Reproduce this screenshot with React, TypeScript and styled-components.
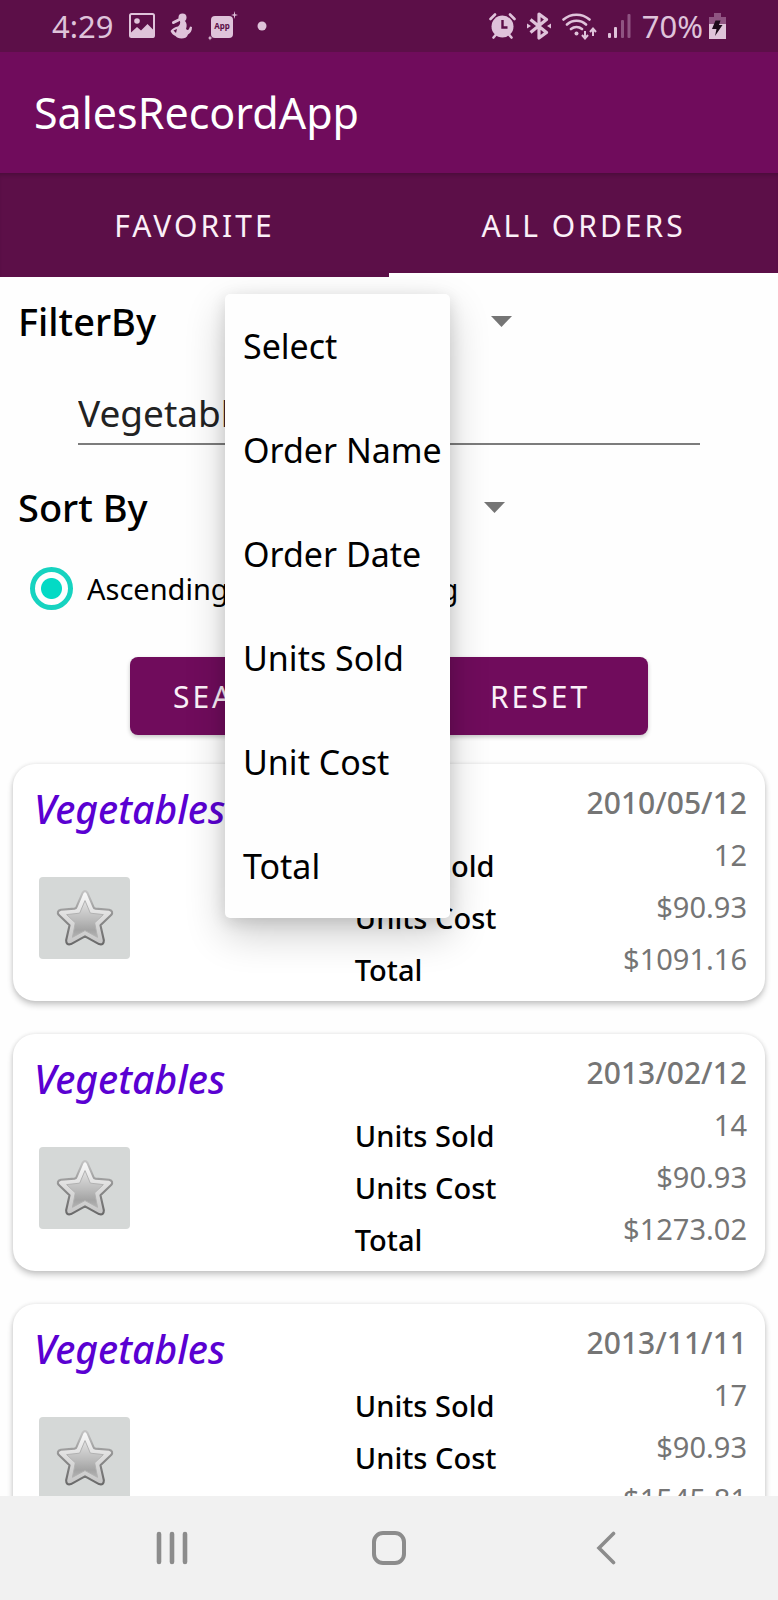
import React, { useState } from "react";
import styled, { createGlobalStyle } from "styled-components";

const GlobalStyle = createGlobalStyle`
  * { box-sizing: border-box; }
  body { margin: 0; background: #fff; }
  body, button, input, select { font-family: "Noto Sans", "Liberation Sans", sans-serif; }
`;

const Screen = styled.div`
  display: flex;
  flex-direction: column;
  height: 100vh;
  overflow: hidden;
  background: #fefefe;
  color: #000;
`;

const StatusBar = styled.div`
  display: flex;
  flex: none;
  justify-content: space-between;
  align-items: center;
  height: 52px;
  padding: 0 52px;
  background: #5c0f48;
  color: #dfc3da;
  font-size: 31px;
`;

const StatusGroup = styled.div<{ $gap: number }>`
  display: flex;
  align-items: center;
  gap: ${(p) => p.$gap}px;
  svg { display: block; flex: none; }
`;

const AppBar = styled.header`
  display: flex;
  flex: none;
  align-items: center;
  height: 121px;
  padding: 0 34px;
  background: #700c5c;
`;

const AppTitle = styled.h1`
  margin: 0;
  color: #fff;
  font-size: 43px;
  font-weight: 400;
`;

const Tabs = styled.nav`
  display: grid;
  flex: none;
  grid-template-columns: 1fr 1fr;
  height: 104px;
  background: #5c0f48;
  box-shadow: inset 0 4px 4px -2px rgba(0, 0, 0, 0.2);
`;

const Tab = styled.button<{ $active?: boolean }>`
  padding: 0;
  border: 0;
  border-top: 4px solid transparent;
  border-bottom: 4px solid ${(p) => (p.$active ? "#fff" : "transparent")};
  background: none;
  color: #fbf0f8;
  font-size: 30px;
  letter-spacing: 3px;
`;

const Filters = styled.form`
  flex: none;
  display: flex;
  flex-direction: column;
`;

const SpinnerRow = styled.div`
  position: relative;
  display: flex;
  align-items: center;
  height: 88px;
  padding-left: 18px;
`;

const SpinnerLabel = styled.label`
  width: 207px;
  font-size: 38px;
  font-weight: 500;
`;

const Spinner = styled.div<{ $width: number }>`
  display: flex;
  align-items: center;
  width: ${(p) => p.$width}px;
  svg { flex: none; }
`;

const SpinnerSelect = styled.select`
  flex: 1;
  min-width: 0;
  padding: 0 18px;
  border: 0;
  appearance: none;
  background: none;
  color: #000;
  font-size: 34px;
`;

const Menu = styled.ul`
  position: absolute;
  top: 17px;
  left: 225px;
  z-index: 2;
  width: 225px;
  margin: 0;
  padding: 0;
  border-radius: 5px;
  background: #fefefe;
  box-shadow: 0 16px 40px rgba(0, 0, 0, 0.2), 0 4px 16px rgba(0, 0, 0, 0.12);
  list-style: none;
`;

const MenuItem = styled.li`
  height: 104px;
  padding-left: 18px;
  font-size: 34px;
  line-height: 105px;
  white-space: nowrap;
  cursor: pointer;
`;

const SearchField = styled.input`
  height: 64px;
  margin: 16px 78px 18px;
  padding: 0;
  border: 0;
  border-bottom: 2px solid #7c7c7c;
  outline: 0;
  background: none;
  color: #222;
  font-size: 37px;
`;

const Directions = styled.div`
  display: flex;
  align-items: center;
  gap: 12px;
  height: 74px;
  padding-left: 30px;
`;

const Direction = styled.label`
  display: flex;
  align-items: center;
  gap: 14px;
  font-size: 29px;
`;

const Radio = styled.input`
  flex: none;
  width: 43px;
  height: 43px;
  margin: 0;
  border: 5px solid #757575;
  border-radius: 50%;
  appearance: none;
  &:checked {
    border-color: #16d3c0;
    background: radial-gradient(circle, #03dac5 10px, transparent 11px);
  }
`;

const Actions = styled.div`
  display: flex;
  justify-content: center;
  gap: 86px;
  margin-top: 32px;
`;

const ActionButton = styled.button`
  width: 216px;
  height: 78px;
  padding: 0;
  border: 0;
  border-radius: 8px;
  background: #700c5c;
  box-shadow: 0 2px 4px rgba(0, 0, 0, 0.22);
  color: #fbf0f8;
  font-size: 30px;
  letter-spacing: 3px;
`;

const Orders = styled.main`
  display: flex;
  flex: 1;
  flex-direction: column;
  gap: 33px;
  min-height: 0;
  padding: 29px 13px 0;
  overflow: hidden;
`;

const Card = styled.article`
  display: grid;
  flex: none;
  grid-template-columns: 45% auto 1fr;
  padding: 13px 18px 5px 21px;
  border-radius: 22px;
  background: #fff;
  box-shadow: 0 4px 6px rgba(0, 0, 0, 0.2), 0 0 4px rgba(0, 0, 0, 0.1);
`;

const Product = styled.div`
  padding-top: 6px;
`;

const ProductName = styled.h2`
  margin: 0 0 42px;
  color: #5a00d2;
  font-size: 39px;
  font-style: italic;
  font-weight: 500;
  line-height: 52px;
`;

const StarButton = styled.button`
  display: grid;
  place-items: center;
  width: 91px;
  height: 82px;
  margin-left: 5px;
  padding: 0;
  border: 0;
  border-radius: 4px;
  background: #d5d8d7;
`;

const Labels = styled.div`
  padding-top: 63px;
  font-size: 29px;
  font-weight: 500;
  line-height: 52px;
`;

const Values = styled.div`
  color: #757575;
  font-size: 29px;
  line-height: 52px;
  text-align: right;
`;

const OrderDate = styled.time`
  display: block;
  font-size: 30px;
  font-weight: 500;
`;

const NavBar = styled.nav`
  display: grid;
  flex: none;
  grid-template-columns: repeat(3, 1fr);
  height: 104px;
  padding: 0 63px;
  background: #f1f1f1;
`;

const NavButton = styled.button`
  display: grid;
  place-items: center;
  padding: 0;
  border: 0;
  background: none;
`;

const ICON = "#dfc3da";
const STATUS_BG = "#5c0f48";

const PictureIcon = () => (
  <svg width="26" height="26" viewBox="0 0 26 26">
    <rect x="1" y="1" width="24" height="23" rx="1.5" fill="none" stroke={ICON} strokeWidth="2" />
    <circle cx="8" cy="8" r="2.8" fill={ICON} />
    <path d="M2 19.500l6-5.500 4 3.500 6.500-6.500 6 6v8H2z" fill={ICON} />
  </svg>
);

const FigureIcon = () => (
  <svg width="23" height="26" viewBox="0 0 23 26">
    <circle cx="12.500" cy="4.500" r="4" fill={ICON} />
    <path d="M3.500 9.500L9.500 6.500" stroke={ICON} strokeWidth="3" fill="none" strokeLinecap="round" />
    <path d="M10 8h5c2 2 2 5 1 8 2 2 3 1 4-2.500l2 .500c0 4-1.500 6-4 7.500-1 3-3.500 4-6.500 4s-5-1-6-2.500c-2-.500-4-2.500-5-5 2-2.500 4.500-4 7.500-4.500 2-2 2.500-3 2-5.500z" fill={ICON} />
    <path d="M3.500 17.500l3.500-1.500-1 4z" fill={STATUS_BG} />
  </svg>
);

const AppIcon = () => (
  <svg width="30" height="30" viewBox="0 0 30 30">
    <rect x="3" y="5" width="22" height="22" rx="4" fill={ICON} />
    <path d="M26.500 0l.700 3.300 2.800.700-2.800.700-.700 3.300-.700-3.300-2.800-.700 2.800-.700zM2 24.500l.700 1.800 1.800.700-1.800.700-.700 1.800-.700-1.800-1.300-.700 1.300-.700z" fill={ICON} />
    <text x="14" y="18" textAnchor="middle" fontSize="8" fontWeight="700" fontFamily="Noto Sans, sans-serif" fill={STATUS_BG}>App</text>
  </svg>
);

const DotIcon = () => (
  <svg width="14" height="10" viewBox="0 0 14 10"><circle cx="9" cy="5" r="4.500" fill={ICON} /></svg>
);

const AlarmIcon = () => (
  <svg width="27" height="26" viewBox="0 0 27 26">
    <circle cx="13.500" cy="13.500" r="11" fill={ICON} />
    <path d="M1.500 6L6 1.500M25.500 6L21 1.500M4.500 24.500l3-3.500M22.500 24.500l-3-3.500" stroke={ICON} strokeWidth="2.600" strokeLinecap="round" />
    <path d="M13.500 7v7.500h5" stroke={STATUS_BG} strokeWidth="2.400" fill="none" />
  </svg>
);

const BluetoothIcon = () => (
  <svg width="24" height="28" viewBox="0 0 24 28">
    <path d="M3.500 7.500l16 13L12 26V2l7.500 5.500-16 13" stroke={ICON} strokeWidth="3.200" fill="none" strokeLinejoin="round" />
    <path d="M0 11.500l4 2.500-4 2.500zM24 11.500l-4 2.500 4 2.500z" fill={ICON} />
  </svg>
);

const WifiIcon = () => (
  <svg width="35" height="27" viewBox="0 0 35 27">
    <path d="M1.500 6.500a20 20 0 0 1 26 0M5 11.500a14 14 0 0 1 19 0M9 16a9 9 0 0 1 11 0" stroke={ICON} strokeWidth="2.600" fill="none" strokeLinecap="round" />
    <circle cx="14.500" cy="20.500" r="2" fill={ICON} />
    <path d="M23 18v7M20 22l3 3.500 3-3.500M31 23v-7M28 19l3-3.500 3 3.500" stroke={ICON} strokeWidth="2" fill="none" />
  </svg>
);

const SignalIcon = () => (
  <svg width="23" height="26" viewBox="0 0 23 26">
    <rect x="0" y="20" width="3" height="5" rx="1" fill={ICON} />
    <rect x="6" y="14" width="3" height="11" rx="1" fill={ICON} />
    <rect x="13" y="7" width="3" height="18" rx="1" fill="#8f5482" />
    <rect x="19.500" y="1" width="3" height="24" rx="1" fill="#8f5482" />
  </svg>
);

const BatteryIcon = () => (
  <svg width="17" height="26" viewBox="0 0 17 26">
    <path d="M5 0h7v4h5v7H0V4h5z" fill="#8f5482" />
    <rect y="11" width="17" height="15" fill={ICON} />
    <path d="M6.500 7.500h5l-1.500 4.500h3.500L6 23l1.500-7H3z" fill="#1d0a1a" />
  </svg>
);

const Arrow = () => (
  <svg width="21" height="11" viewBox="0 0 21 11"><path d="M0 0h21L10.500 11z" fill="#757575" /></svg>
);

const STAR = "M26.500 4Q29 0.500 31.500 4L37.500 18Q38 20 40 20.300L54 21.500Q59 23 56 27L45 37.500L48.500 53Q48.500 58.500 43.500 57L29 49L14.500 57Q9.500 58.500 9.500 53L13 37.500L2 27Q-1 23 4 21.500L18 20.300Q20 20 20.500 18Z";

const Star = () => (
  <svg width="58" height="60" viewBox="-1 0 60 60">
    <defs>
      <linearGradient id="edge" x1="0" y1="0" x2="0" y2="1">
        <stop offset="0" stopColor="#c4c4c4" />
        <stop offset="0.500" stopColor="#8c8c8c" />
        <stop offset="1" stopColor="#6a6a6a" />
      </linearGradient>
      <linearGradient id="rim" x1="0" y1="0" x2="0" y2="1">
        <stop offset="0" stopColor="#fafafa" />
        <stop offset="0.500" stopColor="#dcdcdc" />
        <stop offset="1" stopColor="#c6c6c6" />
      </linearGradient>
      <linearGradient id="core" x1="0" y1="0" x2="0" y2="1">
        <stop offset="0" stopColor="#e2e2e2" />
        <stop offset="0.500" stopColor="#bdbdbd" />
        <stop offset="0.800" stopColor="#a4a4a4" />
        <stop offset="1" stopColor="#b2b2b2" />
      </linearGradient>
    </defs>
    <path d={STAR} fill="url(#rim)" stroke="url(#edge)" strokeWidth="2.200" strokeLinejoin="round" />
    <path d="M29 12L34.500 25L48 26.500L39 35L42 50L29 43L16 50L19 35L10 26.500L23.500 25Z" fill="url(#core)" stroke="#b0b0b0" strokeWidth="1" strokeLinejoin="round" />
  </svg>
);

const OPTIONS = ["Select", "Order Name", "Order Date", "Units Sold", "Unit Cost", "Total"];

const ORDERS = [
  { name: "Vegetables", date: "2010/05/12", units: "12", cost: "$90.93", total: "$1091.16" },
  { name: "Vegetables", date: "2013/02/12", units: "14", cost: "$90.93", total: "$1273.02" },
  { name: "Vegetables", date: "2013/11/11", units: "17", cost: "$90.93", total: "$1545.81" },
];

export default function App() {
  const [query, setQuery] = useState("Vegetables");
  const [filter, setFilter] = useState("Select");
  return (
    <>
      <GlobalStyle />
      <Screen>
        <StatusBar>
          <StatusGroup $gap={15}>
            <span>4:29</span>
            <PictureIcon />
            <FigureIcon />
            <AppIcon />
            <DotIcon />
          </StatusGroup>
          <StatusGroup $gap={11}>
            <AlarmIcon />
            <BluetoothIcon />
            <WifiIcon />
            <SignalIcon />
            <StatusGroup $gap={6}>
              <span>70%</span>
              <BatteryIcon />
            </StatusGroup>
          </StatusGroup>
        </StatusBar>
        <AppBar>
          <AppTitle>SalesRecordApp</AppTitle>
        </AppBar>
        <Tabs>
          <Tab type="button">FAVORITE</Tab>
          <Tab type="button" $active>ALL ORDERS</Tab>
        </Tabs>
        <Filters onSubmit={(e) => e.preventDefault()}>
          <SpinnerRow>
            <SpinnerLabel htmlFor="filter">FilterBy</SpinnerLabel>
            <Spinner $width={287}>
              <SpinnerSelect id="filter" value={filter} onChange={(e) => setFilter(e.target.value)}>
                {OPTIONS.map((o) => <option key={o}>{o}</option>)}
              </SpinnerSelect>
              <Arrow />
            </Spinner>
            <Menu role="listbox" aria-label="FilterBy">
              {OPTIONS.map((o) => (
                <MenuItem key={o} role="option" aria-selected={o === filter} onClick={() => setFilter(o)}>{o}</MenuItem>
              ))}
            </Menu>
          </SpinnerRow>
          <SearchField aria-label="Search text" value={query} onChange={(e) => setQuery(e.target.value)} />
          <SpinnerRow>
            <SpinnerLabel htmlFor="sort">Sort By</SpinnerLabel>
            <Spinner $width={280}>
              <SpinnerSelect id="sort" defaultValue="Select">
                {OPTIONS.map((o) => <option key={o}>{o}</option>)}
              </SpinnerSelect>
              <Arrow />
            </Spinner>
          </SpinnerRow>
          <Directions>
            <Direction><Radio type="radio" name="direction" defaultChecked />Ascending</Direction>
            <Direction><Radio type="radio" name="direction" />Descending</Direction>
          </Directions>
          <Actions>
            <ActionButton type="submit">SEARCH</ActionButton>
            <ActionButton type="reset">RESET</ActionButton>
          </Actions>
        </Filters>
        <Orders>
          {ORDERS.map((o) => (
            <Card key={o.date}>
              <Product>
                <ProductName>{o.name}</ProductName>
                <StarButton type="button" aria-label="Add to favorites"><Star /></StarButton>
              </Product>
              <Labels>
                <div>Units Sold</div>
                <div>Units Cost</div>
                <div>Total</div>
              </Labels>
              <Values>
                <OrderDate>{o.date}</OrderDate>
                <div>{o.units}</div>
                <div>{o.cost}</div>
                <div>{o.total}</div>
              </Values>
            </Card>
          ))}
        </Orders>
        <NavBar>
          <NavButton type="button" aria-label="Recent apps">
            <svg width="32" height="34" viewBox="0 0 32 34">
              <path d="M3 3v28M16 3v28M29 3v28" stroke="#8c8c8c" strokeWidth="4.600" strokeLinecap="round" />
            </svg>
          </NavButton>
          <NavButton type="button" aria-label="Home">
            <svg width="36" height="36" viewBox="0 0 36 36">
              <rect x="3" y="3" width="30" height="30" rx="9" fill="none" stroke="#8c8c8c" strokeWidth="4" />
            </svg>
          </NavButton>
          <NavButton type="button" aria-label="Back">
            <svg width="20" height="34" viewBox="0 0 20 34">
              <path d="M17.500 2.500L3 17l14.500 14.500" stroke="#8c8c8c" strokeWidth="3.600" fill="none" strokeLinecap="round" />
            </svg>
          </NavButton>
        </NavBar>
      </Screen>
    </>
  );
}
